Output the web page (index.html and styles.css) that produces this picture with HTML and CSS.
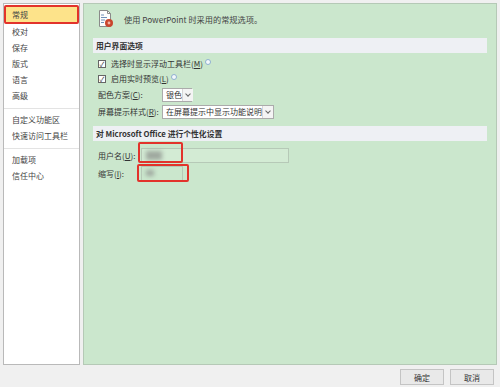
FILE: index.html
```html
<!DOCTYPE html>
<html lang="zh">
<head>
<meta charset="utf-8">
<link rel="stylesheet" href="styles.css">
</head>
<body>
<div class="dialog">
  <div class="panes">
    <ul class="nav">
      <li class="active">常规</li>
      <li>校对</li>
      <li>保存</li>
      <li>版式</li>
      <li>语言</li>
      <li>高级</li>
      <li class="sep"></li>
      <li>自定义功能区</li>
      <li>快速访问工具栏</li>
      <li class="sep"></li>
      <li>加载项</li>
      <li>信任中心</li>
    </ul>
    <div class="main">
      <div class="intro">
        <svg class="intro-icon" width="16" height="18" viewBox="0 0 16 18">
          <path d="M1.5 0.5h8l3 3v13h-11z" fill="#fdfdfd" stroke="#8a8a8a"/>
          <path d="M9.5 0.5v3h3" fill="none" stroke="#8a8a8a"/>
          <path d="M3 5h3M3 7.5h6M3 10h4M3 12.5h3" stroke="#6f8fb8" stroke-width="1"/>
          <circle cx="11" cy="13" r="4" fill="#c9452d"/>
          <circle cx="11" cy="13" r="1.4" fill="#f3b3a4"/>
        </svg>
        <span>使用 PowerPoint 时采用的常规选项。</span>
      </div>
      <div class="section-head">用户界面选项</div>
      <div class="rows">
        <label class="check"><span class="box">✓</span><span class="ctext">选择时显示浮动工具栏(<u>M</u>)</span><span class="info"></span></label>
        <label class="check"><span class="box">✓</span><span class="ctext">启用实时预览(<u>L</u>)</span><span class="info"></span></label>
        <div class="field">
          <span class="flabel">配色方案(<u>C</u>):</span>
          <span class="select small"><span class="stext">银色</span><span class="arrow"></span></span>
        </div>
        <div class="field">
          <span class="flabel">屏幕提示样式(<u>R</u>):</span>
          <span class="select wide"><span class="stext">在屏幕提示中显示功能说明</span><span class="arrow"></span></span>
        </div>
      </div>
      <div class="section-head bold2">对 Microsoft Office 进行个性化设置</div>
      <div class="rows rows2">
        <div class="field">
          <span class="ulabel">用户名(<u>U</u>):</span>
          <span class="input long"><span class="blur b1"></span></span>
          <span class="mark m1"></span>
        </div>
        <div class="field">
          <span class="ulabel">缩写(<u>I</u>):</span>
          <span class="input short"><span class="blur b2"></span></span>
          <span class="mark m2"></span>
        </div>
      </div>
    </div>
  </div>
  <div class="buttons">
    <button class="btn">确定</button>
    <button class="btn">取消</button>
  </div>
</div>
</body>
</html>
```
FILE: styles.css
```css
* { box-sizing: border-box; }
html, body { margin: 0; padding: 0; }
body {
  background: #f0f0f0;
  font-family: "Noto Sans CJK SC", "Noto Sans", sans-serif;
  font-size: 8px;
  color: #3a3a3a;
  width: 500px;
  height: 387px;
  overflow: hidden;
}
.dialog { padding: 3px 3px 0 3px; display: flex; flex-direction: column; height: 387px; }
.panes { display: flex; gap: 3px; height: 362px; }
.nav {
  list-style: none; margin: 0; padding: 1px 0 0 0;
  width: 77px; background: #fff; border: 1px solid #b9b9b9;
}
.nav li { height: 16px; line-height: 16px; padding-left: 8px; color: #444; white-space: nowrap; }
.nav li.active {
  background: #fde38a; border: 2px solid #e2332b; border-radius: 2px;
  height: 19px; line-height: 15px; padding-left: 6px;
}
.nav li.sep { height: 1px; background: #e3e3e3; margin: 4px 0 3px 0; }
.main {
  flex: 1; background: #cbe7cd; border: 1px solid #b5c9b6;
  padding: 5px 9px 0 9px; position: relative;
}
.intro { display: flex; align-items: center; gap: 10px; padding-left: 5px; height: 20px; }
.intro-icon { flex: none; }
.intro span { color: #444; font-size: 8.2px; }
.section-head {
  margin-top: 9px; height: 15px; line-height: 15px; background: #eef0f4;
  padding-left: 3px; font-weight: bold; color: #333; font-size: 7.8px; white-space: nowrap;
}
.rows { padding: 3px 0 0 5px; display: flex; flex-direction: column; }
.check { display: flex; align-items: center; height: 15px; color: #333; white-space: nowrap; }
.box {
  width: 8px; height: 8px; border: 1px solid #666; background: #fff; margin-right: 5px;
  font-size: 7px; line-height: 6px; text-align: center; color: #333; flex: none;
}
.info {
  width: 6px; height: 6px; border-radius: 50%; background: #f4f8fc; border: 1px solid #8fb0d0;
  margin-left: 2px; margin-top: -4px; flex: none;
}
.field { display: flex; align-items: center; height: 17px; position: relative; white-space: nowrap; }
.flabel { width: 64px; color: #333; flex: none; }
.select {
  height: 14px; background: #fff; border: 1px solid #ababab; display: flex; align-items: center;
  padding-left: 3px; justify-content: space-between; color: #333; line-height: 12px; flex: none;
}
.stext { white-space: nowrap; }
.select.small { width: 30px; }
.select.wide { width: 112px; }
.arrow {
  width: 11px; height: 12px; border-left: 1px solid #d6d6d6; background: #f4f4f4; position: relative; flex: none;
}
.arrow::after {
  content: ""; position: absolute; left: 3px; top: 3px; width: 3px; height: 3px;
  border-right: 1px solid #666; border-bottom: 1px solid #666; transform: rotate(45deg);
}
.bold2 { margin-top: 6px; }
.rows2 { padding-top: 5px; }
.rows2 .field { height: 18px; }
.ulabel { width: 43px; color: #333; flex: none; }
.input { height: 15px; background: #cbe7cd; border: 1px solid #b6c9b7; position: relative; flex: none; }
.input.long { width: 148px; background: #d3ebd4; }
.input.short { width: 42px; }
.blur { position: absolute; background: #9fa89f; filter: blur(2px); }
.b1 { left: 4px; top: 2px; width: 16px; height: 9px; }
.b2 { left: 4px; top: 3px; width: 8px; height: 6px; }
.mark { position: absolute; border: 2px solid #e2332b; border-radius: 2px; }
.m1 { left: 40px; top: -4px; width: 45px; height: 21px; }
.m2 { left: 39px; top: 0px; width: 52px; height: 18px; }
.buttons { display: flex; justify-content: flex-end; gap: 6px; padding: 4px 3px 0 0; }
.btn {
  width: 44px; height: 16px; border: 1px solid #c4c4c4; border-radius: 0; background: #e9e9e9;
  font-family: "Noto Sans CJK SC", sans-serif; font-size: 8px; color: #333; padding: 0;
}
```
